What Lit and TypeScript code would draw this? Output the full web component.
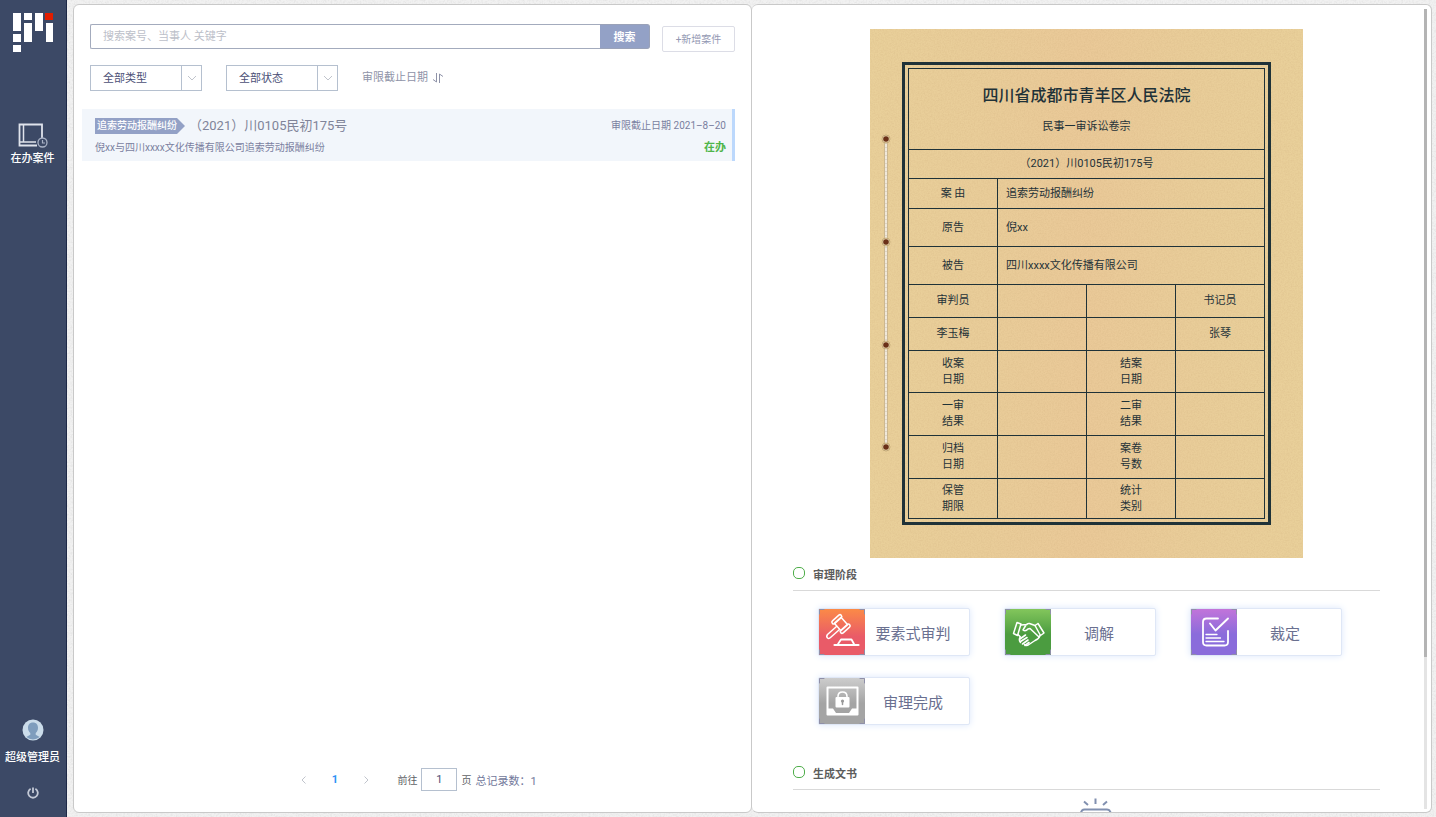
import { LitElement, html, css, svg } from "lit";
import { customElement, property, state } from "lit/decorators.js";

const logo = html`<svg width="40" height="40" viewBox="0 0 40 40" aria-hidden="true">
  <g fill="#fff">
    <rect x="0" y="0" width="8" height="18" /><rect x="0" y="21" width="8" height="8" /><rect x="0" y="32" width="8" height="7" />
    <rect x="11" y="0" width="8" height="7" /><rect x="11" y="10" width="8" height="19" />
    <rect x="22" y="0" width="8" height="18" /><rect x="33" y="10" width="7" height="19" />
  </g>
  <rect x="32" y="0" width="8" height="7" fill="#e11d00" />
</svg>`;

const caseIcon = html`<svg width="30" height="26" viewBox="0 0 30 26" fill="none" stroke="#dfe3ec" aria-hidden="true">
  <path d="M24 15V1.500H1.500V22.500H19" stroke-width="1.800" />
  <path d="M5.500 2V19M1.500 19H18" stroke-width="1.500" />
  <circle cx="24.500" cy="19.500" r="4.500" stroke="#a9b2c6" stroke-width="1.300" />
  <path d="M24.500 17V20H27" stroke="#a9b2c6" stroke-width="1.200" />
</svg>`;

const avatar = html`<svg width="22" height="22" viewBox="0 0 22 22" aria-hidden="true">
  <circle cx="11" cy="11" r="10.500" fill="#cbdcea" />
  <path d="M11 3.500c3.300 0 5 2.200 5 5.300 0 2.300-.9 4.200-2.300 5.300v1.700l4 2.300a10.500 10.500 0 0 1-13.400 0l4-2.300v-1.700C6.900 13 6 11.100 6 8.800c0-3.100 1.700-5.300 5-5.300z" fill="#7f9dbd" />
</svg>`;

const power = html`<svg width="12" height="12" viewBox="0 0 12 12" fill="none" stroke="#c3c9d6" stroke-width="1.800" aria-hidden="true">
  <path d="M3.600 1.800A4.800 4.800 0 1 0 8.400 1.800M6 0.500V6" />
</svg>`;

const chevron = (d: string) => html`<svg width="10" height="10" viewBox="0 0 10 10" fill="none" stroke="#c0c4cc" aria-hidden="true"><path d=${d} /></svg>`;

const sortIcon = html`<svg width="12" height="10" viewBox="0 0 12 10" fill="none" stroke="#8f93a8" stroke-width="1" aria-hidden="true">
  <path d="M4.500 0V9L1 6.500M7.500 10V1L11 3.500" />
</svg>`;

const lamp = html`<svg width="36" height="34" viewBox="0 0 36 34" fill="none" stroke="#8190b0" stroke-width="2" aria-hidden="true">
  <path d="M17.500 0.500V6M6 3.500L10 7M29 3.500L25 7" />
  <path d="M1.500 17L4 12.500Q5 11.500 6.500 11.500H29Q31 11.500 31.500 12.500L34 17V32H1.500Z" />
</svg>`;

const gavel = svg`
  <g transform="rotate(-42 22 15)">
    <rect x="17.500" y="10" width="9" height="10" />
    <rect x="16" y="7" width="12" height="3.500" rx="1.700" />
    <rect x="16" y="19.500" width="12" height="3.500" rx="1.700" />
  </g>
  <path d="M17.500 17.500L8.500 25.500Q7 27.500 8.500 29Q10 30 11.500 28.500L20.500 20.500" />
  <path d="M15.500 36H39.500" stroke-width="2.200" /><path d="M19 35L22 30.500H32.500L35 35" stroke-width="1.800" />`;

const handshake = svg`
  <path d="M12 13.500L8.500 24.500L12.500 26.500L16 15Z" />
  <path d="M33 14.500L30 16.500L35.500 26.500L39 24Z" />
  <path d="M16 16L22 15.500M30 16.500L24.500 14.500Q22.500 14 21 16L18 21Q20.500 23 23 20L25 19.500L34 28" />
  <path d="M13 25.500L15.500 28M35 26.500Q34 30 30 31.500L24 35.500Q21.500 37.500 19.500 35.500" />
  <path d="M15 30L20.500 26M15.500 32.500L22 28.500M17.500 35L23 31M20 36.500L24 33.500" stroke-width="1.600" />
  <path d="M15 28.500Q13.500 31 15.500 33.500" />`;

const ruling = svg`
  <path d="M27 9.500H15.500Q12 9.500 12 13V33Q12 36.500 15.500 36.500H33.500Q37 36.500 37 33V22" stroke-width="1.800" />
  <path d="M19 14.500L24.500 21.500L37 9.500" stroke-width="1.900" />
  <path d="M15 25.500H26M15 29H29.500M15 32.500H33" stroke-width="1.300" />`;

const finished = svg`
  <path d="M8.500 9.500H38.500V36.500H8.500Z" stroke-width="2" />
  <path d="M8 30.500H14L17 35H30L33 30.500H39V37H8Z" fill="#fff" stroke="none" />
  <rect x="16.500" y="19" width="14" height="10.500" rx="1" fill="#fff" stroke="none" />
  <path d="M19 18.500Q19 14 23.500 14Q28 14 28 18.500" stroke-width="1.600" />
  <circle cx="23.500" cy="23" r="1.600" fill="#999" stroke="none" /><path d="M23.500 23V26.500" stroke="#999" />`;

@customElement("grain-layer")
class GrainLayer extends LitElement {
  @property() tone = "light";

  static styles = css`
    :host { position: absolute; inset: 0; pointer-events: none; overflow: hidden; }
    svg { display: block; width: 100%; height: 100%; }
  `;

  render() {
    const paper = this.tone === "paper";
    return html`<svg aria-hidden="true">
      <filter id="grain" x="0" y="0" width="100%" height="100%">
        <feTurbulence type="fractalNoise" baseFrequency=${paper ? "0.7" : "0.55"} numOctaves="2" seed="4" />
        <feColorMatrix values=${paper
          ? "0 0 0 0 0.62  0 0 0 0 0.42  0 0 0 0 0.2  0.5 0 0 0 -0.17"
          : "0 0 0 0 0.5  0 0 0 0 0.5  0 0 0 0 0.5  0.5 0 0 0 -0.2"} />
      </filter>
      <rect width="100%" height="100%" filter="url(#grain)" />
    </svg>`;
  }
}

@customElement("side-bar")
class SideBar extends LitElement {
  static styles = css`
    :host {
      display: flex; flex-direction: column; align-items: center; box-sizing: border-box;
      width: 67px; flex: none; padding: 13px 1px 18px 0; position: relative;
      background: #3c4966; border-right: 1px solid #1d2847; color: #fff;
    }
    svg { display: block; }
    .nav {
      display: flex; flex-direction: column; align-items: center; gap: 2px; margin-top: 70px;
      color: #fff; text-decoration: none; font-size: 11px; line-height: 16px; font-weight: 500;
    }
    .user {
      display: flex; flex-direction: column; align-items: center; gap: 9px; margin-top: auto;
      font-size: 11px; line-height: 16px; font-weight: 500;
    }
    .power { margin: 21px 0 0; padding: 0; border: 0; background: none; cursor: pointer; }
  `;

  render() {
    return html`${logo}
      <a class="nav" href="#cases">${caseIcon}<span>在办案件</span></a>
      <div class="user">${avatar}<span>超级管理员</span></div>
      <button class="power" aria-label="退出">${power}</button>`;
  }
}

@customElement("case-list")
class CaseList extends LitElement {
  @state() private page = "1";

  static styles = css`
    :host { display: flex; flex-direction: column; min-width: 0; padding: 19px 16px 21px; }
    button, input, select { font-family: inherit; box-sizing: border-box; margin: 0; outline: none; }
    button { cursor: pointer; }
    .top { display: flex; gap: 12px; align-items: flex-start; }
    .search { display: flex; flex: 1; min-width: 0; height: 25px; }
    .search input {
      flex: 1; min-width: 0; padding: 0 12px; font-size: 11px; color: #4b4f6d;
      border: 1px solid #a3abbd; border-right: 0; border-radius: 2px 0 0 2px;
    }
    .search input::placeholder { color: #bcc0c9; }
    .search button {
      width: 50px; padding: 0 0 2px; border: 1px solid #9aa2b8; border-left: 0; border-radius: 0 3px 3px 0;
      background: #93a1c6; color: #fff; font-size: 11px; font-weight: 700;
    }
    .add {
      width: 73px; height: 26px; margin-top: 2px; padding: 0 0 2px; border: 1px solid #dcdde6; border-radius: 2px;
      background: #fff; color: #9398b3; font-size: 10px;
    }
    .filters { display: flex; gap: 24px; align-items: center; margin-top: 13px; }
    .pick {
      display: grid; grid-template-columns: 1fr 20px; width: 112px; height: 26px;
      box-sizing: border-box; border: 1px solid #b5c0cf;
    }
    .pick select {
      grid-area: 1 / 1 / 2 / 3; appearance: none; border: 0; background: none;
      padding: 0 22px 0 12px; font-size: 11px; color: #4b4f76;
    }
    .pick span {
      grid-area: 1 / 2; display: flex; align-items: center; justify-content: center;
      border-left: 1px solid #b5c0cf; pointer-events: none;
    }
    .sort {
      display: flex; align-items: center; gap: 4px; padding: 0; border: 0; background: none;
      font-size: 11px; line-height: 16px; color: #8f93a8;
    }
    .rows { flex: 1; min-height: 0; margin: 18px 0 0 -8px; padding: 0; list-style: none; }
    .row {
      display: grid; grid-template-columns: 1fr auto; row-gap: 5px; align-items: center;
      padding: 8px 6px 5px 13px; border-right: 3px solid #bcd8fc; background: #f2f6fb;
      font-size: 10px; line-height: 16px; color: #7a7fa0;
    }
    .head { display: flex; align-items: center; gap: 4px; }
    .tag {
      padding: 0 8px 0 2px; background: #93a1c6; color: #fff; font-weight: 500;
      clip-path: polygon(0 0, calc(100% - 8px) 0, 100% 50%, calc(100% - 8px) 100%, 0 100%);
    }
    .no { font-size: 13px; line-height: 18px; color: #808499; }
    .live { justify-self: end; color: #4fb54a; font-size: 11px; font-weight: 700; }
    .pager { display: flex; align-items: center; justify-content: center; font-size: 10px; color: #606266; }
    .pager button {
      display: flex; align-items: center; justify-content: center; width: 31px; height: 23px;
      padding: 0; border: 0; background: none; font-size: 11px; font-weight: 700; color: #2e93f5;
    }
    .goto { display: flex; align-items: center; gap: 4px; margin-left: 16px; }
    .goto input {
      width: 36px; height: 23px; padding: 0; border: 1px solid #b5c0cf; text-align: center;
      font-size: 11px; color: #4b4f76;
    }
    .total { margin-left: 4px; font-size: 11px; color: #72789b; }
  `;

  private pick(label: string) {
    return html`<div class="pick">
      <select aria-label=${label}><option>${label}</option></select>
      <span>${chevron("M1 3L5 7L9 3")}</span>
    </div>`;
  }

  render() {
    return html`
      <div class="top">
        <form class="search" @submit=${(e: Event) => e.preventDefault()}>
          <input type="text" aria-label="搜索" placeholder="搜索案号、当事人 关键字" />
          <button type="submit">搜索</button>
        </form>
        <button class="add">+新增案件</button>
      </div>
      <div class="filters">
        ${this.pick("全部类型")}${this.pick("全部状态")}
        <button class="sort">审限截止日期${sortIcon}</button>
      </div>
      <ul class="rows">
        <li class="row">
          <div class="head"><span class="tag">追索劳动报酬纠纷</span><span class="no">（2021）川0105民初175号</span></div>
          <span>审限截止日期 2021–8–20</span>
          <span>倪xx与四川xxxx文化传播有限公司追索劳动报酬纠纷</span>
          <span class="live">在办</span>
        </li>
      </ul>
      <nav class="pager">
        <button aria-label="上一页">${chevron("M6.500 1.500L3 5L6.500 8.500")}</button>
        <button>1</button>
        <button aria-label="下一页">${chevron("M3.500 1.500L7 5L3.500 8.500")}</button>
        <label class="goto">前往
          <input type="text" .value=${this.page} @change=${(e: Event) => (this.page = (e.target as HTMLInputElement).value)} />
          页</label>
        <span class="total">总记录数：1</span>
      </nav>`;
  }
}

@customElement("case-cover")
class CaseCover extends LitElement {
  static styles = css`
    :host {
      display: block; position: relative; box-sizing: border-box; width: 433px; margin: 0 auto; padding: 33px 32px;
      background: linear-gradient(90deg, #e9d09a 0%, #e9cd99 25%, #eac998 50%, #e9cd99 75%, #e9d09a 100%);
      color: #1f3238;
    }
    .frame { position: relative; border: 3px solid #1f3238; padding: 3px; }
    table { width: 100%; table-layout: fixed; border-collapse: collapse; font-size: 11px; line-height: 16px; }
    td, th { border: 1px solid #1f3238; padding: 0; text-align: center; font-weight: 400; }
    td.text { text-align: left; padding-left: 8px; }
    .court { font-size: 16px; line-height: 24px; font-weight: 500; margin-bottom: 11px; }
    .h81 { height: 81px; } .h29 { height: 29px; } .h30 { height: 30px; } .h38 { height: 38px; }
    .h33 { height: 33px; } .h42 { height: 42px; } .h43 { height: 43px; } .h40 { height: 40px; }
    .thread { position: absolute; left: 10px; top: 104px; }
  `;

  private pair(a: string[], b: string[], size: string) {
    return html`<tr class=${size}>
      <th>${a[0]}<br />${a[1]}</th><td></td><th>${b[0]}<br />${b[1]}</th><td></td>
    </tr>`;
  }

  render() {
    return html`<grain-layer tone="paper"></grain-layer>
      <svg class="thread" width="12" height="322" viewBox="0 0 12 322" aria-hidden="true">
        <path d="M6 6V314" stroke="#a98f63" stroke-width="4" opacity=".6" />
        <path d="M6 6V314" stroke="#f0e8da" stroke-width="2.500" />
        <path d="M6 6V314" stroke="#d9cfbc" stroke-width="1.500" stroke-dasharray="1 3" />
        ${[6, 109, 212, 314].map((y) => svg`<circle cx="6" cy=${y} r="4" fill="#ead9b0" stroke="#b79c69" stroke-width="0.800" /><circle cx="6" cy=${y} r="2.800" fill="#6a3018" />`)}
      </svg>
      <div class="frame"><table>
        <tr class="h81"><th colspan="4"><div class="court">四川省成都市青羊区人民法院</div>民事一审诉讼卷宗</th></tr>
        <tr class="h29"><td colspan="4">（2021）川0105民初175号</td></tr>
        <tr class="h30"><th>案 由</th><td class="text" colspan="3">追索劳动报酬纠纷</td></tr>
        <tr class="h38"><th>原告</th><td class="text" colspan="3">倪xx</td></tr>
        <tr class="h38"><th>被告</th><td class="text" colspan="3">四川xxxx文化传播有限公司</td></tr>
        <tr class="h33"><th>审判员</th><td></td><td></td><th>书记员</th></tr>
        <tr class="h33"><td>李玉梅</td><td></td><td></td><td>张琴</td></tr>
        ${this.pair(["收案", "日期"], ["结案", "日期"], "h42")}
        ${this.pair(["一审", "结果"], ["二审", "结果"], "h43")}
        ${this.pair(["归档", "日期"], ["案卷", "号数"], "h43")}
        ${this.pair(["保管", "期限"], ["统计", "类别"], "h40")}
      </table></div>`;
  }
}

@customElement("case-detail")
class CaseDetail extends LitElement {
  static styles = css`
    :host { display: flex; min-width: 0; padding: 0 4px 0 0; }
    .scroll { flex: 1; min-width: 0; overflow-y: auto; scrollbar-width: none; padding: 24px 44px 0 41px; }
    .bar { width: 3px; margin: 4px 0 3px; background: #e4e4e4; }
    .thumb { height: 81%; background: #b4b4b4; }
    h2 {
      display: flex; align-items: center; gap: 8px; height: 32px; margin: 0; border-bottom: 1px solid #d9d9d9;
      font-size: 11px; font-weight: 700; color: #5c5c5c;
    }
    h2::before {
      content: ""; box-sizing: border-box; width: 12px; height: 12px; margin-bottom: 3px;
      border: 1px solid #4fae4a; border-radius: 5px;
    }
    .stages { display: flex; flex-wrap: wrap; gap: 21px 34px; padding: 17px 0 32px 25px; }
    .stage {
      display: flex; align-items: center; box-sizing: border-box; width: 152px; height: 48px; padding: 0 8px 0 0;
      border: 1px solid #dfe7f6; border-radius: 2px; background: #fff; box-shadow: 0 0 7px #dbe7fb;
      font-family: inherit; font-size: 15px; color: #6a7090; cursor: pointer;
    }
    .stage svg { flex: none; }
    .stage span { flex: 1; text-align: center; white-space: nowrap; }
    .red { background: linear-gradient(#fb8a47, #e95b68 60%); }
    .green { background: linear-gradient(#83c65c, #4b9c40 55%); }
    .purple { background: linear-gradient(#c274da, #8a6cdb 55%); }
    .grey { background: linear-gradient(#cdcdcd, #a4a4a4 55%); }
    .docs { display: flex; justify-content: center; padding: 8px 0 200px 18px; }
  `;

  private stage(label: string, tone: string, icon: unknown) {
    return html`<button class="stage">
      <svg class=${tone} width="46" height="46" viewBox="0 0 46 46" fill="none" stroke="#fff" stroke-width="1.500" stroke-linejoin="round" stroke-linecap="round" aria-hidden="true">
        ${icon}
        <path d="M0.500 5V0.500H5M41 0.500H45.500V5M45.500 41V45.500H41M5 45.500H0.500V41" stroke="#8f8fa8" stroke-width="1" />
      </svg>
      <span>${label}</span>
    </button>`;
  }

  render() {
    return html`
      <div class="scroll">
        <case-cover></case-cover>
        <h2>审理阶段</h2>
        <div class="stages">
          ${this.stage("要素式审判", "red", gavel)}
          ${this.stage("调解", "green", handshake)}
          ${this.stage("裁定", "purple", ruling)}
          ${this.stage("审理完成", "grey", finished)}
        </div>
        <h2>生成文书</h2>
        <div class="docs">${lamp}</div>
      </div>
      <div class="bar"><div class="thumb"></div></div>`;
  }
}

@customElement("app-root")
class AppRoot extends LitElement {
  static styles = css`
    :host {
      display: flex; position: relative; height: 100vh; background: #f1f1f1; overflow: hidden;
      font-family: Roboto, "Noto Sans CJK SC", sans-serif;
    }
    main { position: relative; display: grid; grid-template-columns: 679fr 680fr; flex: 1; min-width: 0; padding: 4px 4px 4px 6px; }
    .panel { box-sizing: border-box; min-height: 0; border: 1px solid #c9c9c9; border-radius: 6px; background: #fff; overflow: hidden; }
    .detail { border-left: 0; }
  `;

  render() {
    return html`<grain-layer></grain-layer>
      <side-bar></side-bar>
      <main>
        <case-list class="panel"></case-list>
        <case-detail class="panel detail"></case-detail>
      </main>`;
  }
}
